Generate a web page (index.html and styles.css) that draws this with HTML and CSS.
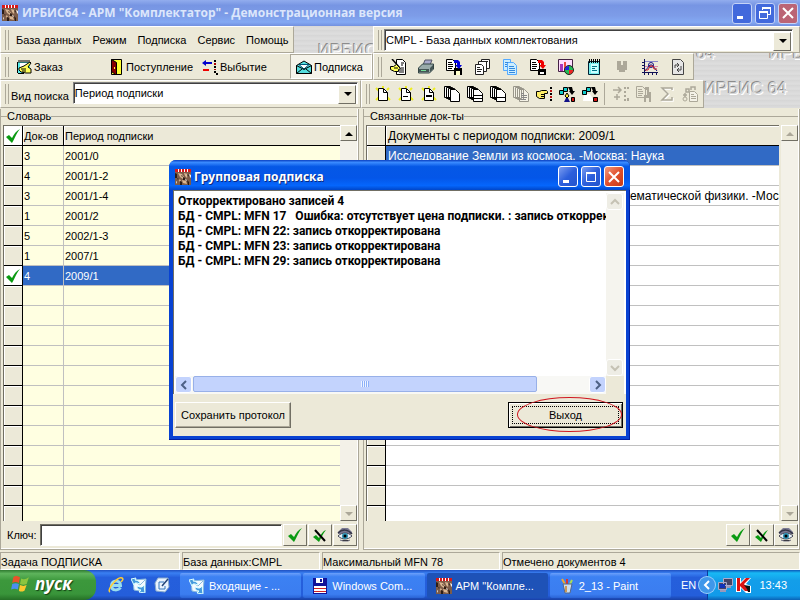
FILE: index.html
```html
<!DOCTYPE html>
<html lang="ru">
<head>
  <meta charset="UTF-8">
  <meta name="viewport" content="width=device-width, initial-scale=1.0">
  <title>ИРБИС64 - АРМ "Комплектатор"</title>
  <link rel="stylesheet" href="styles.css">
</head>
<body>

  <!-- Icons -->
  <svg class="sprite" aria-hidden="true">
    <symbol id="app" viewBox="0 0 16 16"><path fill="#7d5c48" d="M0 3h16v13H0z"/><path fill="#fff" d="M0 0h16v3H0z"/><path fill="#d81818" d="M0 0h3v3H0zM4 0h2v3H4zM7 0h2v3H7zM10 0h2v3h-2zM13 0h3v3h-3z"/><path fill="#d9b692" d="M3 4l4 1 2 3-1 2-3-2zM9 4l4 1-1 4-2-2zM3 10l3 1-1 2zM7 11l4 1 1 3-4-1z"/><path fill="#2d1d14" d="M0 4l2 1v4H0zM6 6l2 1-1 1zM8 8l2 1v2H8zM12 5l2 1-1 2zM2 9l2 1-1 1zM5 12l2 1v3H5zM12 11l2 2v3h-1z"/><path fill="#eee" d="M14 5l2 1v3l-1-1zM1 12l1 1-1 2zM10 10l2 1-1 1z"/></symbol>
    <symbol id="write" viewBox="0 0 16 16"><path fill="#5ee" d="M2 3h12v11H2z"/><path fill="#fff" d="M4 4h8v5H4z"/><path stroke="#000" fill="none" d="M1.500 3v11M3 1v3M5 1v3M7 1v3M9 1v3M11 1v3M13 1v3M2 14.500h6"/><path fill="#ff5" stroke="#000" d="M3 9l5-2 6-4 1 1-3 4 3 2v4h-5l-5-1-2-2z"/><path stroke="#000" d="M5 10h5M6 12h4"/></symbol>
    <symbol id="door" viewBox="0 0 16 16"><path fill="#ff3" stroke="#000" d="M3.500.500h10v15h-10z"/><path fill="#800" stroke="#000" d="M3.500.500l5 3v12h-1l-4-3z"/><path fill="#ff3" d="M6 8h1v2H6z"/></symbol>
    <symbol id="leave" viewBox="0 0 16 16"><path fill="#00c" d="M0 4l4-3v2h6v2H4v2z"/><path fill="#e00" d="M1 10h6v2H1z"/><path fill="#000" d="M12 1h2v2h-2zM12 7h2v2h-2zM12 12h2v2h-2zM14 14h2v2h-2z"/><path fill="#a00" d="M12 4h2v2h-2zM12 10h2v1h-2z"/></symbol>
    <symbol id="mail" viewBox="0 0 16 16"><path fill="#5dd" stroke="#000" d="M.500 6.500L8 2l7.500 4.500v8H.500z"/><path fill="#fff" stroke="#057" d="M3 5.500h10L8 10z"/><path fill="none" stroke="#000" d="M.500 6.500l7.500 4 7.500-4M.500 14.500L6 10M15.500 14.500L10 10"/></symbol>
    <symbol id="editdoc" viewBox="0 0 16 16"><path fill="#fff" stroke="#000" d="M6.500.500h6l3 3v12h-9z"/><path stroke="#000" d="M11 4h3M11 6h2M9 11h5M9 13h5M11 9h3"/><path stroke="#000" stroke-width="1.500" d="M2 0l8 9"/><path fill="#ff5" stroke="#000" d="M.500 7.500h3l3-2 4 4-2 1v2h-4l-4-2z"/><path stroke="#000" d="M4 9h4"/></symbol>
    <symbol id="printer" viewBox="0 0 16 16"><path fill="#aac" stroke="#556" d="M5 6l2-5h7l-2 5z"/><path fill="#9aa" stroke="#344" d="M.500 9l4-4h11v5l-4 4h-11z"/><path fill="#455" d="M1 10h10v3H1zM12 9l3-3v4l-3 3z"/><path fill="#7d9" d="M3 11h5v1H3z"/></symbol>
    <symbol id="docsave" viewBox="0 0 16 16"><path fill="#fff" stroke="#000" d="M.500.500h6l3 3v8h-9z"/><path stroke="#000" d="M2 3.500h4M2 5.500h5M2 7.500h5M2 9.500h4"/><path fill="#000" d="M8 9h8v7H8z"/><path fill="#ffc" d="M10 12h4v4h-4z"/><path fill="#00d" d="M8 1h4l2 2v3h2l-3 4-4-4h2V4H8z"/></symbol>
    <symbol id="docsavered" viewBox="0 0 16 16"><path fill="#fff" stroke="#000" d="M.500.500h6l3 3v8h-9z"/><path stroke="#000" d="M2 3.500h4M2 5.500h5M2 7.500h5M2 9.500h4"/><path fill="#000" d="M8 10h8v6H8z"/><path fill="#fff" d="M10 13h4v2h-4z"/><path fill="#e00" d="M8 1h4l2 2v3h2l-3 4-4-4h2V4H8z"/></symbol>
    <symbol id="docs" viewBox="0 0 16 16"><g fill="#fff" stroke="#222"><path d="M7.500.500h8v9h-8z"/><path d="M4.500 2.500h8v10h-8z"/><path d="M1.500 5.500h6l2 2v8h-8z"/></g><path stroke="#222" d="M3 8.500h3M3 10.500h5M3 12.500h4M10 2.500h4"/></symbol>
    <symbol id="copies" viewBox="0 0 16 16"><g fill="#cef" stroke="#5af"><path d="M1.500.500h7v11h-7z"/><path d="M5.500 3.500h6l3 3v9h-9z"/></g><path stroke="#38d" d="M7 7.500h5M7 9.500h6M7 11.500h6M7 13.500h6M3 3.500h3M3 5.500h2M3 7.500h2"/></symbol>
    <symbol id="chart" viewBox="0 0 16 16"><path fill="#fdf" stroke="#424" d="M.500.500h14v12h-14z"/><path fill="#a3b" d="M2 5h3v7H2z"/><path fill="#e44" d="M6 3h2v9H6z"/><circle cx="11" cy="11" r="4.500" fill="#2b5" stroke="#222"/><path fill="#22d" d="M11 11V7a4 4 0 0 0-4 4z"/><path fill="#e22" d="M11 11h4a4 4 0 0 1-4 4z"/></symbol>
    <symbol id="notepad" viewBox="0 0 16 16"><path fill="#7ee" stroke="#023" d="M2.500 2.500h11v13h-11z"/><path fill="#cff" d="M5 5h7v9H5z"/><path stroke="#000" d="M3.500 0v4M5.500 0v4M7.500 0v4M9.500 0v4M11.500 0v4M13.500 0v4"/><path stroke="#078" d="M6 7.500h5M6 9.500h3M6 11.500h5"/></symbol>
    <symbol id="weight" viewBox="0 0 16 16"><path fill="#aca899" d="M3 2h4v4h2V2h4v9h-2v2H5v-2H3z"/></symbol>
    <symbol id="graph" viewBox="0 0 16 16"><path stroke="#115" fill="none" d="M2.500 0v16M0 13.500h16M0 3.500h2M0 6.500h2M0 9.500h2M6.500 13v3M10.500 13v3M14.500 13v3"/><path stroke="#88c" d="M3 2.500h13"/><path stroke="#d8a" d="M3 7.500h13"/><path fill="none" stroke="#118" d="M3 12l5-6h2l5 6"/><circle cx="9" cy="6" r="2.500" fill="none" stroke="#118"/><path fill="none" stroke="#c22" d="M3 11h3l2-4h3l1 3h3"/></symbol>
    <symbol id="refresh" viewBox="0 0 16 16"><path fill="#e6e6e6" stroke="#444" d="M2.500.500h8l3 3v12h-11z"/><path fill="none" stroke="#444" d="M5 9V6h4M7 4l2 2-2 2M11 7v4H7M9 9l-2 2 2 2"/></symbol>
    <symbol id="page" viewBox="0 0 16 16"><path stroke="#ee2" stroke-width="2" d="M1 2l3 3M1 14l3-3M15 14l-3-3M14 2l-2 2M8 0v2"/><path fill="#fff" stroke="#000" d="M3.500 2.500h5l4 4v8h-9z"/><path fill="none" stroke="#000" d="M8.500 3v3.500h4"/></symbol>
    <symbol id="pageline" viewBox="0 0 16 16"><use href="#page"/><path stroke="#000" d="M5 10.500h5"/></symbol>
    <symbol id="pagebox" viewBox="0 0 16 16"><use href="#page"/><path stroke="#000" stroke-width="2" d="M5 10h6"/></symbol>
    <symbol id="stack" viewBox="0 0 16 16"><path fill="#fff" stroke="#000" d="M.500.500h6v11h-6zM2.500 1.500h6v11h-6zM4.500 2.500h6v11h-6z"/><path fill="#fff" stroke="#000" d="M6.500 3.500h5l4 4v8h-9z"/></symbol>
    <symbol id="stacklines" viewBox="0 0 16 16"><use href="#stack"/><path stroke="#000" d="M7 9.500h8M7 12.500h8"/></symbol>
    <symbol id="stackline" viewBox="0 0 16 16"><use href="#stack"/><path stroke="#000" d="M7 11.500h8"/></symbol>
    <symbol id="stackgrey" viewBox="0 0 16 16"><path fill="#f4f2e6" stroke="#99968a" d="M.500.500h6v11h-6zM2.500 1.500h6v11h-6zM4.500 2.500h6v11h-6zM6.500 3.500h5l4 4v8h-9z"/><path stroke="#888" d="M8 7.500h3M8 9.500h6M8 11.500h6M8 13.500h5"/></symbol>
    <symbol id="finger" viewBox="0 0 16 16"><path fill="#fe6" stroke="#000" d="M.500 5.500h3l2-1h5l1 1v2h-3v5h-5l-3-2z"/><path stroke="#000" d="M5 8.500h3M5 10.500h3"/><path fill="#000" d="M14 1h2v2h-2zM14 13h2v2h-2zM14 7h2v2h-2z"/><path fill="#b11" d="M14 4h2v2h-2zM14 10h2v2h-2z"/></symbol>
    <symbol id="tree" viewBox="0 0 16 16"><path fill="#1cc" stroke="#000" d="M.500 4.500h4v4h-4zM4.500 1.500h4v4h-4z"/><path fill="#000" d="M9 1h4l1 4h2l-3 4-3-4h1z"/><path fill="#fe3" stroke="#000" d="M8 7l2 3-2 2-2-2z"/><path fill="#118" d="M7 12h2l2 4H5z"/><path fill="#c11" stroke="#000" d="M12.500 11.500h3v4h-3z"/></symbol>
    <symbol id="tree2" viewBox="0 0 16 16"><path fill="#fff" d="M2 8h6l4 7H1z"/><path fill="#1cc" stroke="#000" d="M.500 4.500h4v4h-4zM4.500 1.500h4v4h-4z"/><path fill="#000" d="M9 1h4l1 4h2l-3 4-3-4h1z"/><path fill="#c11" stroke="#000" d="M11.500 11.500h4v4h-4z"/></symbol>
    <symbol id="move" viewBox="0 0 16 16"><path stroke="#aca899" stroke-width="1.500" fill="none" d="M0 4h8M5 1l3 3-3 3M1 11h6M4 8v6"/><path fill="#aca899" d="M11 1h2v2h-2zM14 1h2v2h-2zM11 5h2v2h-2zM11 9h2v2h-2zM14 12h2v3h-2zM11 13h2v2h-2z"/></symbol>
    <symbol id="savegrey" viewBox="0 0 16 16"><path fill="none" stroke="#aca899" d="M.500.500h6l3 3v8h-9z"/><path stroke="#aca899" d="M2 3.500h4M2 5.500h5M2 7.500h5M2 9.500h4"/><path fill="#aca899" d="M9 1h4v5h2v10h-2v-4h-3v4H8V9h3V4H9z"/></symbol>
    <symbol id="sigma" viewBox="0 0 16 16"><path fill="none" stroke="#fff" stroke-width="1.500" d="M14 5V3H4l6 6-6 6h10v-3"/><path fill="none" stroke="#aca899" stroke-width="1.500" d="M13 4V2H3l6 6-6 6h10v-3"/></symbol>
    <symbol id="treegrey" viewBox="0 0 16 16"><path fill="none" stroke="#aca899" stroke-width="1.500" d="M4 6V3h3v3zM9 4V1h4v3M1 9h4M3 7v4"/><circle cx="3" cy="13" r="2" fill="none" stroke="#aca899"/><path fill="#f4f2e8" stroke="#aca899" d="M7.500 5.500h5l3 3v7h-8z"/><path stroke="#aca899" d="M9 8.500h3M9 10.500h5M9 12.500h5"/></symbol>
    <symbol id="check" viewBox="0 0 16 16"><path fill="#0a9a12" d="M1 9l3-2 3 3c2-4 4-7 8-9-4 5-5 9-8 14z"/></symbol>
    <symbol id="uncheck" viewBox="0 0 16 16"><path fill="#0a9a12" d="M1 10l3-2 3 3c2-4 4-7 7-8-4 5-4 7-7 12z"/><path stroke="#000" stroke-width="2" d="M3 3l10 11"/></symbol>
    <symbol id="eye" viewBox="0 0 16 16"><path fill="#7a7a94" d="M1 5l4-4h6l4 4v2H1z"/><path fill="#e8f2fa" stroke="#445" d="M1 9c4-4 10-4 14 0-4 4-10 4-14 0z"/><circle cx="8" cy="9" r="3" fill="#2a8fb0"/><circle cx="8" cy="9" r="1.500"/><path fill="none" stroke="#334" stroke-width="1.500" d="M1 6c4-4 10-4 14 1"/><path stroke="#778" d="M3 13l3 1h5l2-1"/></symbol>
    <symbol id="ie" viewBox="0 0 16 16"><path fill="none" stroke="#9de" stroke-width="3" d="M3.500 8.500h9c0-6-9-6-9 0s7 5 9 2"/><path fill="none" stroke="#fc3" stroke-width="1.500" d="M2 15C-2 13 10-1 14 1c2 1 0 3-1 4"/></symbol>
    <symbol id="outlook" viewBox="0 0 16 16"><path fill="#f4f9ff" stroke="#8bd" d="M2 3l13-1-1 13-11-2z"/><path fill="none" stroke="#8bd" d="M3 4l6 4 5-5"/><path fill="#49d" stroke="#dff" d="M0 2l5-1-1 2c3 0 5 2 5 4L6 6H4L3 8zM14 16l-6-1 2-2c-3 0-4-2-4-4l3 1h2l2-2z"/></symbol>
    <symbol id="desktop" viewBox="0 0 16 16"><path fill="#e9f4ff" stroke="#8ac" d="M4 1h10l1 9-4 5-9-1L1 6z"/><path fill="none" stroke="#37b" d="M10 5H5v7h6V9"/><path stroke="#247" stroke-width="1.500" d="M8 9l6-7"/></symbol>
    <symbol id="floppy" viewBox="0 0 16 16"><path fill="#119" d="M1 0h14v16H1z"/><path fill="#fff" d="M4 0h7v5H4zM2 8h12v7H2z"/><path fill="#119" d="M8 1h2v3H8z"/><path fill="#c22" d="M2 10h12v1H2zM2 13h12v1H2z"/></symbol>
    <symbol id="paint" viewBox="0 0 16 16"><path stroke="#ea3" stroke-width="2" d="M7 8L3 1"/><path stroke="#d33" stroke-width="2" d="M8 8V1"/><path stroke="#ad5" stroke-width="2" d="M10 8l3-6"/><path fill="#cde" stroke="#568" d="M4 6h9l-2 9H6z"/><path fill="#c95" d="M6 8h2v6H6z"/></symbol>
    <symbol id="net" viewBox="0 0 16 16"><path fill="#446" stroke="#aac" d="M6.500 1.500h9v7h-9zM1.500 5.500h8v7h-8z"/><path fill="#13b" d="M3 7h5v4H3z"/><path fill="#99b" d="M3 13h6v2H3zM10 9h4v2h-4z"/></symbol>
    <symbol id="kav" viewBox="0 0 16 16"><path fill="#fff" d="M1 1h5v4l4-4h6l-5 6 5 2v7h-5l-5-5v4H1z"/><path fill="#d11" d="M2 1h3v6l6-6h4L9 7l5 7h-4L5 9v5H2z"/><path fill="#111" d="M9 8l6 1v6h-2l-1-3z"/></symbol>
    <symbol id="flag" viewBox="0 0 18 18"><path fill="#e8532a" d="M3 3c2-2 4-1 6 0L8 8C6 7 4 7 2 8z"/><path fill="#8bc53f" d="M10 4c2 1 4 1 7-1l-2 6c-2 1-4 1-6 0z"/><path fill="#4a8ff0" d="M2 9c2-1 4-1 6 0l-1 5c-2-1-4-1-6 0z"/><path fill="#fcc72e" d="M9 10c2 1 4 1 6 0l-2 5c-2 1-4 1-5 0z"/></symbol>
    <symbol id="min" viewBox="0 0 16 16"><path fill="#fff" d="M3 11h6v3H3z"/></symbol>
    <symbol id="max" viewBox="0 0 16 16"><path fill="none" stroke="#fff" d="M3.500 3.500h9v9h-9z"/><path fill="#fff" d="M3 3h10v2H3z"/></symbol>
    <symbol id="restore" viewBox="0 0 16 16"><path fill="none" stroke="#fff" d="M5.500 5V2.500h8v7H11M2.500 6.500h8v7h-8z"/><path fill="#fff" d="M5 2h9v2H5zM2 6h9v2H2z"/></symbol>
    <symbol id="close" viewBox="0 0 16 16"><path stroke="#fff" stroke-width="2" d="M3 3l10 10M13 3L3 13"/></symbol>
    <symbol id="up" viewBox="0 0 16 16"><path fill="currentColor" d="M8 6l4 4H4z"/></symbol>
    <symbol id="down" viewBox="0 0 16 16"><path fill="currentColor" d="M4 6h8l-4 4z"/></symbol>
    <symbol id="chev" viewBox="0 0 16 16"><path fill="none" stroke="currentColor" stroke-width="2" d="M6 4l4 4-4 4"/></symbol>
  </svg>

  <header class="titlebar">
    <svg class="icon"><use href="#app"/></svg>
    <h1>ИРБИС64 - АРМ "Комплектатор" - Демонстрационная версия</h1>
    <div class="window-buttons">
      <button aria-label="Свернуть"><svg class="icon"><use href="#min"/></svg></button>
      <button aria-label="Восстановить"><svg class="icon"><use href="#restore"/></svg></button>
      <button class="red" aria-label="Закрыть"><svg class="icon"><use href="#close"/></svg></button>
    </div>
  </header>

  <div class="coolbar">
    <div class="band-row">
      <nav class="band menu">
        <button>База данных</button><button>Режим</button><button>Подписка</button><button>Сервис</button><button>Помощь</button>
      </nav>
      <div class="emboss low"><span>ИРБИС</span></div>
      <div class="band base">
        <div class="combo">
          <select aria-label="База данных"><option>CMPL - База данных комплектования</option></select>
        </div>
      </div>
    </div>
    <div class="band-row">
      <div class="band modes">
        <button><svg class="icon"><use href="#write"/></svg>Заказ</button>
        <button><svg class="icon"><use href="#door"/></svg>Поступление</button>
        <button><svg class="icon"><use href="#leave"/></svg>Выбытие</button>
        <button class="pressed"><svg class="icon"><use href="#mail"/></svg>Подписка</button>
      </div>
      <div class="band tools">
        <button aria-label="Правка"><svg class="icon"><use href="#editdoc"/></svg></button>
        <button aria-label="Печать"><svg class="icon"><use href="#printer"/></svg></button>
        <button aria-label="Экспорт"><svg class="icon"><use href="#docsave"/></svg></button>
        <button aria-label="Документы"><svg class="icon"><use href="#docs"/></svg></button>
        <button aria-label="Копия"><svg class="icon"><use href="#copies"/></svg></button>
        <button aria-label="Сохранить"><svg class="icon"><use href="#docsavered"/></svg></button>
        <button aria-label="Статистика"><svg class="icon"><use href="#chart"/></svg></button>
        <button aria-label="Блокнот"><svg class="icon"><use href="#notepad"/></svg></button>
        <button aria-label="Вес" disabled><svg class="icon"><use href="#weight"/></svg></button>
        <button aria-label="График"><svg class="icon"><use href="#graph"/></svg></button>
        <button aria-label="Обновить"><svg class="icon"><use href="#refresh"/></svg></button>
      </div>
      <div class="emboss high"><span>64</span><span>ИРБИС</span></div>
    </div>
    <div class="band-row">
      <div class="band search">
        <label for="kind">Вид поиска</label>
        <div class="combo">
          <select id="kind"><option>Период подписки</option></select>
        </div>
      </div>
      <div class="band pages">
        <button aria-label="Новый"><svg class="icon"><use href="#page"/></svg></button>
        <button aria-label="Новый по образцу"><svg class="icon"><use href="#pageline"/></svg></button>
        <button aria-label="Новый с копией"><svg class="icon"><use href="#pagebox"/></svg></button>
        <button aria-label="Группа"><svg class="icon"><use href="#stack"/></svg></button>
        <button aria-label="Группа строк"><svg class="icon"><use href="#stacklines"/></svg></button>
        <button aria-label="Группа полей"><svg class="icon"><use href="#stackline"/></svg></button>
        <button aria-label="Список"><svg class="icon"><use href="#stackgrey"/></svg></button>
        <button aria-label="Переход"><svg class="icon"><use href="#finger"/></svg></button>
        <button aria-label="Дерево"><svg class="icon"><use href="#tree"/></svg></button>
        <button aria-label="Ветвь"><svg class="icon"><use href="#tree2"/></svg></button>
        <i class="divider"></i>
        <button aria-label="Перенос" disabled><svg class="icon"><use href="#move"/></svg></button>
        <button aria-label="Запись" disabled><svg class="icon"><use href="#savegrey"/></svg></button>
        <button aria-label="Сумма" disabled><svg class="icon"><use href="#sigma"/></svg></button>
        <button aria-label="Связи" disabled><svg class="icon"><use href="#treegrey"/></svg></button>
      </div>
      <div class="emboss"><span>ИРБИС 64</span></div>
    </div>
  </div>

  <main class="panels">
    <section class="group">
      <h2>Словарь</h2>
      <div class="grid-area">
        <div class="grid dictionary">
          <table>
            <thead>
              <tr><th class="mark on"><svg class="icon"><use href="#check"/></svg></th><th class="count">Док-ов</th><th>Период подписки</th></tr>
            </thead>
            <tbody>
              <tr><td class="mark"></td><td>3</td><td>2001/0</td></tr>
              <tr><td class="mark"></td><td>4</td><td>2001/1-2</td></tr>
              <tr><td class="mark"></td><td>3</td><td>2001/1-4</td></tr>
              <tr><td class="mark"></td><td>1</td><td>2001/2</td></tr>
              <tr><td class="mark"></td><td>5</td><td>2002/1-3</td></tr>
              <tr><td class="mark"></td><td>1</td><td>2007/1</td></tr>
              <tr class="selected"><td class="mark on"><svg class="icon"><use href="#check"/></svg></td><td>4</td><td>2009/1</td></tr>
              <tr><td class="mark"></td><td></td><td></td></tr>
              <tr><td class="mark"></td><td></td><td></td></tr>
              <tr><td class="mark"></td><td></td><td></td></tr>
              <tr><td class="mark"></td><td></td><td></td></tr>
              <tr><td class="mark"></td><td></td><td></td></tr>
              <tr><td class="mark"></td><td></td><td></td></tr>
              <tr><td class="mark"></td><td></td><td></td></tr>
              <tr><td class="mark"></td><td></td><td></td></tr>
              <tr><td class="mark"></td><td></td><td></td></tr>
              <tr><td class="mark"></td><td></td><td></td></tr>
              <tr><td class="mark"></td><td></td><td></td></tr>
              <tr><td class="mark"></td><td></td><td></td></tr>
            </tbody>
          </table>
        </div>
        <div class="scroll">
          <button aria-label="Вверх"><svg class="icon"><use href="#up"/></svg></button>
          <button class="dim" aria-label="Вниз"><svg class="icon"><use href="#down"/></svg></button>
        </div>
      </div>
      <div class="keybar">
        <label for="key">Ключ:</label>
        <input id="key" type="text">
        <button aria-label="Отметить"><svg class="icon"><use href="#check"/></svg></button>
        <button aria-label="Снять отметку"><svg class="icon"><use href="#uncheck"/></svg></button>
        <button aria-label="Просмотр"><svg class="icon"><use href="#eye"/></svg></button>
      </div>
    </section>

    <section class="group">
      <h2>Связанные док-ты</h2>
      <div class="grid-area">
        <div class="grid documents">
          <table>
            <thead>
              <tr><th class="mark"></th><th>Документы с периодом подписки: 2009/1</th></tr>
            </thead>
            <tbody>
              <tr class="selected"><td class="mark"></td><td>Исследование Земли из космоса. -Москва: Наука</td></tr>
              <tr><td class="mark"></td><td></td></tr>
              <tr><td class="mark"></td><td>Журнал вычислительной математики и математической физики. -Москва</td></tr>
              <tr><td class="mark"></td><td></td></tr>
              <tr><td class="mark"></td><td></td></tr>
              <tr><td class="mark"></td><td></td></tr>
              <tr><td class="mark"></td><td></td></tr>
              <tr><td class="mark"></td><td></td></tr>
              <tr><td class="mark"></td><td></td></tr>
              <tr><td class="mark"></td><td></td></tr>
              <tr><td class="mark"></td><td></td></tr>
              <tr><td class="mark"></td><td></td></tr>
              <tr><td class="mark"></td><td></td></tr>
              <tr><td class="mark"></td><td></td></tr>
              <tr><td class="mark"></td><td></td></tr>
              <tr><td class="mark"></td><td></td></tr>
              <tr><td class="mark"></td><td></td></tr>
              <tr><td class="mark"></td><td></td></tr>
              <tr><td class="mark"></td><td></td></tr>
            </tbody>
          </table>
        </div>
        <div class="scroll">
          <button class="dim" aria-label="Вверх"><svg class="icon"><use href="#up"/></svg></button>
          <button class="dim" aria-label="Вниз"><svg class="icon"><use href="#down"/></svg></button>
        </div>
      </div>
      <div class="keybar right">
        <button aria-label="Отметить"><svg class="icon"><use href="#check"/></svg></button>
        <button aria-label="Снять отметку"><svg class="icon"><use href="#uncheck"/></svg></button>
        <button aria-label="Просмотр"><svg class="icon"><use href="#eye"/></svg></button>
      </div>
    </section>
  </main>

  <div class="status">
    <span>Задача ПОДПИСКА</span>
    <span>База данных:CMPL</span>
    <span>Максимальный MFN 78</span>
    <span>Отмечено документов 4</span>
  </div>

  <footer class="taskbar">
    <button class="start"><svg class="flag"><use href="#flag"/></svg>пуск</button>
    <div class="quick">
      <button aria-label="Internet Explorer"><svg class="icon"><use href="#ie"/></svg></button>
      <button aria-label="Outlook Express"><svg class="icon"><use href="#outlook"/></svg></button>
      <button aria-label="Рабочий стол"><svg class="icon"><use href="#desktop"/></svg></button>
    </div>
    <div class="tasks">
      <button><svg class="icon"><use href="#outlook"/></svg>Входящие - ...</button>
      <button><svg class="icon"><use href="#floppy"/></svg>Windows Com...</button>
      <button class="active"><svg class="icon"><use href="#app"/></svg>АРМ "Компле...</button>
      <button><svg class="icon"><use href="#paint"/></svg>2_13 - Paint</button>
    </div>
    <span class="lang">EN</span>
    <div class="tray">
      <button class="expand" aria-label="Показать значки"><svg class="icon flip"><use href="#chev"/></svg></button>
      <svg class="icon"><use href="#net"/></svg>
      <svg class="icon"><use href="#kav"/></svg>
      <time>13:43</time>
    </div>
  </footer>

  <!-- Dialog -->
  <div class="dialog" role="dialog" aria-labelledby="dialog-title">
    <div class="dialog-title">
      <svg class="icon"><use href="#app"/></svg>
      <h2 id="dialog-title">Групповая подписка</h2>
      <div class="window-buttons">
        <button aria-label="Свернуть"><svg class="icon"><use href="#min"/></svg></button>
        <button aria-label="Развернуть"><svg class="icon"><use href="#max"/></svg></button>
        <button class="red" aria-label="Закрыть"><svg class="icon"><use href="#close"/></svg></button>
      </div>
    </div>
    <div class="log">
      <textarea readonly wrap="off" aria-label="Протокол">Откорректировано записей 4
БД - CMPL: MFN 17   Ошибка: отсутствует цена подписки. : запись откорректирована
БД - CMPL: MFN 22: запись откорректирована
БД - CMPL: MFN 23: запись откорректирована
БД - CMPL: MFN 29: запись откорректирована</textarea>
      <div class="vbar">
        <button aria-label="Вверх"><svg class="icon turn-up"><use href="#chev"/></svg></button>
        <button aria-label="Вниз"><svg class="icon turn-down"><use href="#chev"/></svg></button>
      </div>
      <div class="hbar">
        <button aria-label="Влево"><svg class="icon flip"><use href="#chev"/></svg></button>
        <div class="hbar-track"><div class="hbar-thumb"><i></i></div></div>
        <button aria-label="Вправо"><svg class="icon"><use href="#chev"/></svg></button>
      </div>
    </div>
    <div class="dialog-buttons">
      <button class="save">Сохранить протокол</button>
      <button class="exit"><span>Выход</span></button>
    </div>
  </div>

</body>
</html>
```
FILE: styles.css
```css
* {
  box-sizing: border-box;
  margin: 0;
  padding: 0;
}

body {
  display: flex;
  flex-direction: column;
  position: relative;
  height: 100vh;
  overflow: hidden;
  background: #ece9d8;
  color: #000;
  font: 11px/14px "Liberation Sans", Arial, sans-serif;
}

button,
input,
select,
textarea {
  font: inherit;
  color: inherit;
  border: 0;
  border-radius: 0;
  background: none;
}

.sprite {
  position: absolute;
  width: 0;
  height: 0;
}

.icon {
  display: block;
  flex: none;
  width: 16px;
  height: 16px;
}

/* Title bar */
.titlebar {
  display: flex;
  align-items: center;
  flex: none;
  height: 26px;
  padding: 0 2px;
  gap: 4px;
  background: linear-gradient(#92adee, #7795e3 20%, #7d9ce8 60%, #84a9f3 85%, #7290df);
  color: #dce6fb;
}

.titlebar h1,
.dialog-title h2 {
  flex: 1;
  font: bold 12px/18px "Open Sans", sans-serif;
  white-space: nowrap;
}

.window-buttons {
  display: flex;
  gap: 3px;
}

.window-buttons button {
  display: flex;
  align-items: center;
  justify-content: center;
  width: 20px;
  height: 21px;
  border: 1px solid #fff;
  border-radius: 3px;
  background: linear-gradient(135deg, #7c9df0, #2c5fdc 50%, #2354cc);
}

.window-buttons .red {
  background: linear-gradient(135deg, #f19b80, #e1502c 50%, #c53a16);
}

.titlebar .window-buttons button {
  border-color: #c5d3f7;
  background: #4269dc;
}

.titlebar .window-buttons .red {
  background: #bb6475;
}

/* Toolbars */
.coolbar {
  flex: none;
  background: repeating-linear-gradient(#d8d8d8 0, #dedede 3px, #d4d4d4 5px);
}

.band-row {
  display: flex;
  height: 27px;
}

.band-row:last-child {
  height: 28px;
}

.band {
  display: flex;
  flex: none;
  align-items: center;
  padding-left: 10px;
  border: 1px solid;
  border-color: #fff #aca899 #aca899 #fff;
  background: linear-gradient(90deg, #aca899, #aca899) 4px 3px / 1px 20px no-repeat,
    linear-gradient(90deg, #aca899, #aca899) 7px 3px / 1px 20px no-repeat, #ece9d8;
}

.menu {
  width: 294px;
  gap: 11px;
  padding-left: 15px;
}

.base {
  flex: 0 1 427px;
  padding: 0 6px 0 10px;
}

.modes {
  width: 373px;
  padding-left: 15px;
}

.modes button {
  display: flex;
  align-items: center;
  gap: 2px;
  height: 25px;
}

.modes button:nth-child(1) {
  width: 92px;
}

.modes button:nth-child(2) {
  width: 94px;
}

.modes button:nth-child(3) {
  width: 88px;
}

.modes .pressed {
  flex: 1;
  padding-left: 5px;
  border: 1px solid;
  border-color: #aca899 #fff #fff #aca899;
  background: #f5f3ea;
}

.tools {
  width: 321px;
}

.tools button {
  display: grid;
  place-items: center;
  width: 28px;
  height: 24px;
}

.search {
  width: 361px;
  gap: 4px;
  padding: 0 2px 2px 10px;
}

.search label {
  padding-top: 5px;
}

.pages {
  width: 343px;
  padding-left: 9px;
}

.pages button {
  display: grid;
  place-items: center;
  width: 23px;
  height: 24px;
}

.divider {
  width: 1px;
  height: 22px;
  margin: 0 4px 0 3px;
  background: #aca899;
}

.combo {
  position: relative;
  flex: 1;
  height: 22px;
  border: 1px solid;
  border-color: #808080 #fff #fff #808080;
  background: #fff;
  box-shadow: inset 1px 1px #404040;
}

.combo select {
  appearance: none;
  width: 100%;
  height: 20px;
  padding: 0 20px 0 1px;
}

.combo::before {
  content: "";
  position: absolute;
  top: 2px;
  right: 1px;
  width: 16px;
  height: 17px;
  border: 1px solid;
  border-color: #fff #716f64 #716f64 #fff;
  background: #ece9d8;
}

.combo::after {
  content: "";
  position: absolute;
  top: 9px;
  right: 5px;
  border: 4px solid transparent;
  border-top-color: #000;
  border-bottom: 0;
}

.emboss {
  flex: 1;
  min-width: 0;
  overflow: hidden;
  white-space: nowrap;
  color: #d8d8d8;
  font: 17px/18px "Liberation Sans", Arial, sans-serif;
  text-shadow: -1px -1px #8c8c8c, 1px 1px #fff;
}

.emboss.low {
  padding: 16px 0 0 24px;
}

.emboss.high {
  display: flex;
  align-items: flex-end;
  gap: 54px;
  height: 10px;
  padding-left: 2px;
}

/* Panels */
.panels {
  display: grid;
  grid-template-columns: 359fr 437fr;
  gap: 4px;
  flex: 1;
  min-height: 0;
  padding-top: 1px;
}

.group {
  display: flex;
  flex-direction: column;
  min-width: 0;
  min-height: 0;
  padding: 0 1px 0 2px;
  border: 1px solid #aca899;
  border-top: 0;
  background: linear-gradient(#aca899, #aca899) 0 7px / 100% 1px no-repeat;
  box-shadow: inset -1px -1px #fff;
}

.group h2 {
  align-self: flex-start;
  height: 16px;
  margin-left: 4px;
  background: #ece9d8;
  font: inherit;
}

.grid-area {
  display: flex;
  flex: 1;
  min-height: 0;
}

.grid {
  flex: 1;
  min-width: 0;
  overflow: hidden;
  border-top: 1px solid #716f64;
  border-left: 1px solid #716f64;
}

.grid table {
  width: 100%;
  table-layout: fixed;
  border-spacing: 0;
}

.grid th,
.grid td {
  height: 20px;
  padding: 0 0 0 1px;
  overflow: hidden;
  border-right: 1px solid #c0c0c0;
  border-bottom: 1px solid #c0c0c0;
  text-align: left;
  white-space: nowrap;
  font-weight: normal;
}

.grid th {
  border-color: #000;
  background: #ece9d8;
  box-shadow: inset 1px 1px #fff;
}

.grid th:last-child,
.grid td:last-child {
  border-right: 0;
}

.grid .mark {
  width: 19px;
  padding: 0;
  border-right: 1px solid #000;
  border-bottom: 1px solid #000;
  background: #ece9d8;
  box-shadow: inset 1px 1px #fff;
}

.grid .mark.on {
  padding-left: 1px;
  background: #fff;
}

.grid .count {
  width: 41px;
}

.dictionary {
  background: #ffffe1;
}

.documents {
  background: #fff;
  font-size: 12px;
}

.documents td,
.documents th {
  padding-left: 2px;
}

.grid .selected td:not(.mark) {
  background: #316ac5;
  color: #fff;
}

.scroll {
  display: flex;
  flex-direction: column;
  justify-content: space-between;
  width: 17px;
  background: #f3f1e8;
}

.documents + .scroll {
  width: 19px;
  border-left: 2px solid #ece9d8;
}

.scroll button {
  display: grid;
  place-items: center;
  height: 16px;
  border: 1px solid;
  border-color: #fff #716f64 #716f64 #fff;
  background: #ece9d8;
}

.scroll .dim {
  color: #aca899;
}

.keybar {
  display: flex;
  align-items: center;
  gap: 1px;
  height: 28px;
  padding-bottom: 1px;
}

.keybar.right {
  justify-content: flex-end;
  gap: 0;
}

.keybar label {
  width: 36px;
  padding-left: 4px;
}

.keybar input {
  flex: 1;
  min-width: 0;
  height: 22px;
  border: 1px solid;
  border-color: #716f64 #fff #fff #716f64;
  background: #fff;
  box-shadow: inset 1px 1px #404040;
}

.keybar button {
  display: grid;
  place-items: center;
  width: 24px;
  height: 22px;
  border: 1px solid;
  border-color: #fff #716f64 #716f64 #fff;
}

/* Status bar */
.status {
  display: grid;
  grid-template-columns: 180fr 138fr 178fr 298fr;
  gap: 2px;
  flex: none;
  padding-top: 2px;
}

.status span {
  height: 18px;
  border: 1px solid;
  border-color: #aca899 #fff #fff #aca899;
  line-height: 18px;
  white-space: nowrap;
}

/* Taskbar */
.taskbar {
  display: flex;
  align-items: stretch;
  flex: none;
  height: 30px;
  background: linear-gradient(#1f4fc0, #3a80f2 10%, #255fdc 25%, #245edb 85%, #1941a5);
  color: #fff;
}

.taskbar button {
  display: flex;
  align-items: center;
}

.start {
  flex: none;
  width: 96px;
  gap: 5px;
  padding: 0 0 2px 10px;
  border-radius: 0 12px 12px 0;
  background: linear-gradient(#2f7a30, #5eb45c 12%, #3c983c 35%, #39953a 80%, #256f26);
  font: italic bold 17px/20px "Open Sans", sans-serif;
  text-shadow: 1px 1px 1px #134013;
}

.flag {
  width: 20px;
  height: 20px;
}

.quick {
  display: flex;
  gap: 7px;
  width: 84px;
  padding-left: 12px;
}

.tasks {
  display: flex;
  flex: 1;
  gap: 2px;
  padding: 3px 0 2px;
}

.tasks button {
  flex: 1;
  min-width: 0;
  gap: 4px;
  max-width: 160px;
  padding-left: 9px;
  border-radius: 2px;
  background: linear-gradient(#6ba0fb, #3c81f3 15%, #3b7df0 85%, #2a63d4);
  white-space: nowrap;
}

.tasks .active {
  background: #1e52b7;
}

.lang {
  width: 36px;
  padding-left: 10px;
  line-height: 30px;
}

.tray {
  display: flex;
  align-items: center;
  gap: 2px;
  width: 93px;
  border-left: 1px solid #0b3d9c;
  background: linear-gradient(#0c59b9, #18b9f5 10%, #139ee9 35%, #119bea 85%, #0a62b5);
}

.tray time {
  margin-left: auto;
  padding-right: 13px;
}

.tray .expand {
  width: 16px;
  height: 16px;
  margin-left: -9px;
  border-radius: 50%;
  background: #3f97ea;
  box-shadow: 0 0 0 1px #9cd0fa;
}

.flip {
  transform: rotate(180deg);
}

.turn-up {
  transform: rotate(-90deg);
}

.turn-down {
  transform: rotate(90deg);
}

/* Dialog */
.dialog {
  position: absolute;
  top: 160px;
  left: 169px;
  display: flex;
  flex-direction: column;
  width: 461px;
  height: 280px;
  padding: 0 4px 4px;
  border-radius: 7px 7px 0 0;
  background: #0842d2;
  box-shadow: inset -1px -1px #001ea0;
  overflow: hidden;
}

.dialog-title {
  display: flex;
  align-items: center;
  gap: 3px;
  flex: none;
  height: 30px;
  margin: 0 -4px;
  padding: 3px 6px 0;
  background: linear-gradient(#0a3fc0, #3a8bff 8%, #0558e6 22%, #0456e8 60%, #0566fc 85%, #0046c9);
  color: #fff;
}

.dialog-title h2 {
  text-shadow: 1px 1px #0a2a80;
}

.log {
  display: grid;
  grid-template-columns: 1fr 18px;
  grid-template-rows: 1fr 18px;
  flex: 1;
  min-height: 0;
  padding: 2px 2px 0 1px;
  border-top: 1px solid #716f64;
  border-left: 1px solid #716f64;
  background: #fff;
}

.log textarea {
  width: 100%;
  height: 100%;
  padding: 1px 4px 0 3px;
  overflow: hidden;
  resize: none;
  font: bold 12px/15px Roboto, "Liberation Sans", sans-serif;
}

.vbar {
  display: flex;
  flex-direction: column;
  justify-content: space-between;
  background: #f5f4ee;
  color: #c5c2b4;
}

.vbar button,
.hbar button {
  display: grid;
  place-items: center;
  flex: none;
  width: 17px;
  height: 17px;
  border: 1px solid #fff;
  border-radius: 3px;
}

.vbar button {
  background: #eeede5;
}

.hbar {
  display: flex;
  gap: 1px;
  background: #f8f8f5;
  color: #4d6185;
}

.hbar button {
  background: #c3d3fd;
}

.log::after {
  content: "";
  background: #ece9d8;
}

.hbar-track {
  flex: 1;
}

.hbar-thumb {
  display: grid;
  place-items: center;
  width: 87%;
  height: 16px;
  border: 1px solid #98b0e8;
  border-radius: 2px;
  background: #c3d3fd;
}

.hbar-thumb i {
  width: 8px;
  height: 6px;
  background: repeating-linear-gradient(90deg, #eef4ff 0, #eef4ff 1px, #8cb0f8 1px, #8cb0f8 2px);
}

.dialog-buttons {
  display: flex;
  align-items: center;
  justify-content: space-between;
  flex: none;
  height: 42px;
  padding: 0 3px 0 2px;
  background: #ece9d8;
}

.dialog-buttons button {
  height: 26px;
  border: 1px solid;
  border-color: #fff #716f64 #716f64 #fff;
  box-shadow: inset -1px -1px #aca899;
}

.dialog-buttons .save {
  width: 116px;
}

.dialog-buttons .exit {
  position: relative;
  width: 115px;
  padding: 3px;
  border-color: #000;
  box-shadow: inset 1px 1px #fff, inset -1px -1px #716f64;
}

.exit span {
  display: block;
  border: 1px dotted #000;
  line-height: 16px;
}

/* red mark around the button */
.exit::after {
  content: "";
  position: absolute;
  inset: -6px 0 -5px 8px;
  border: 1px solid #d01820;
  border-radius: 50%;
}
```
